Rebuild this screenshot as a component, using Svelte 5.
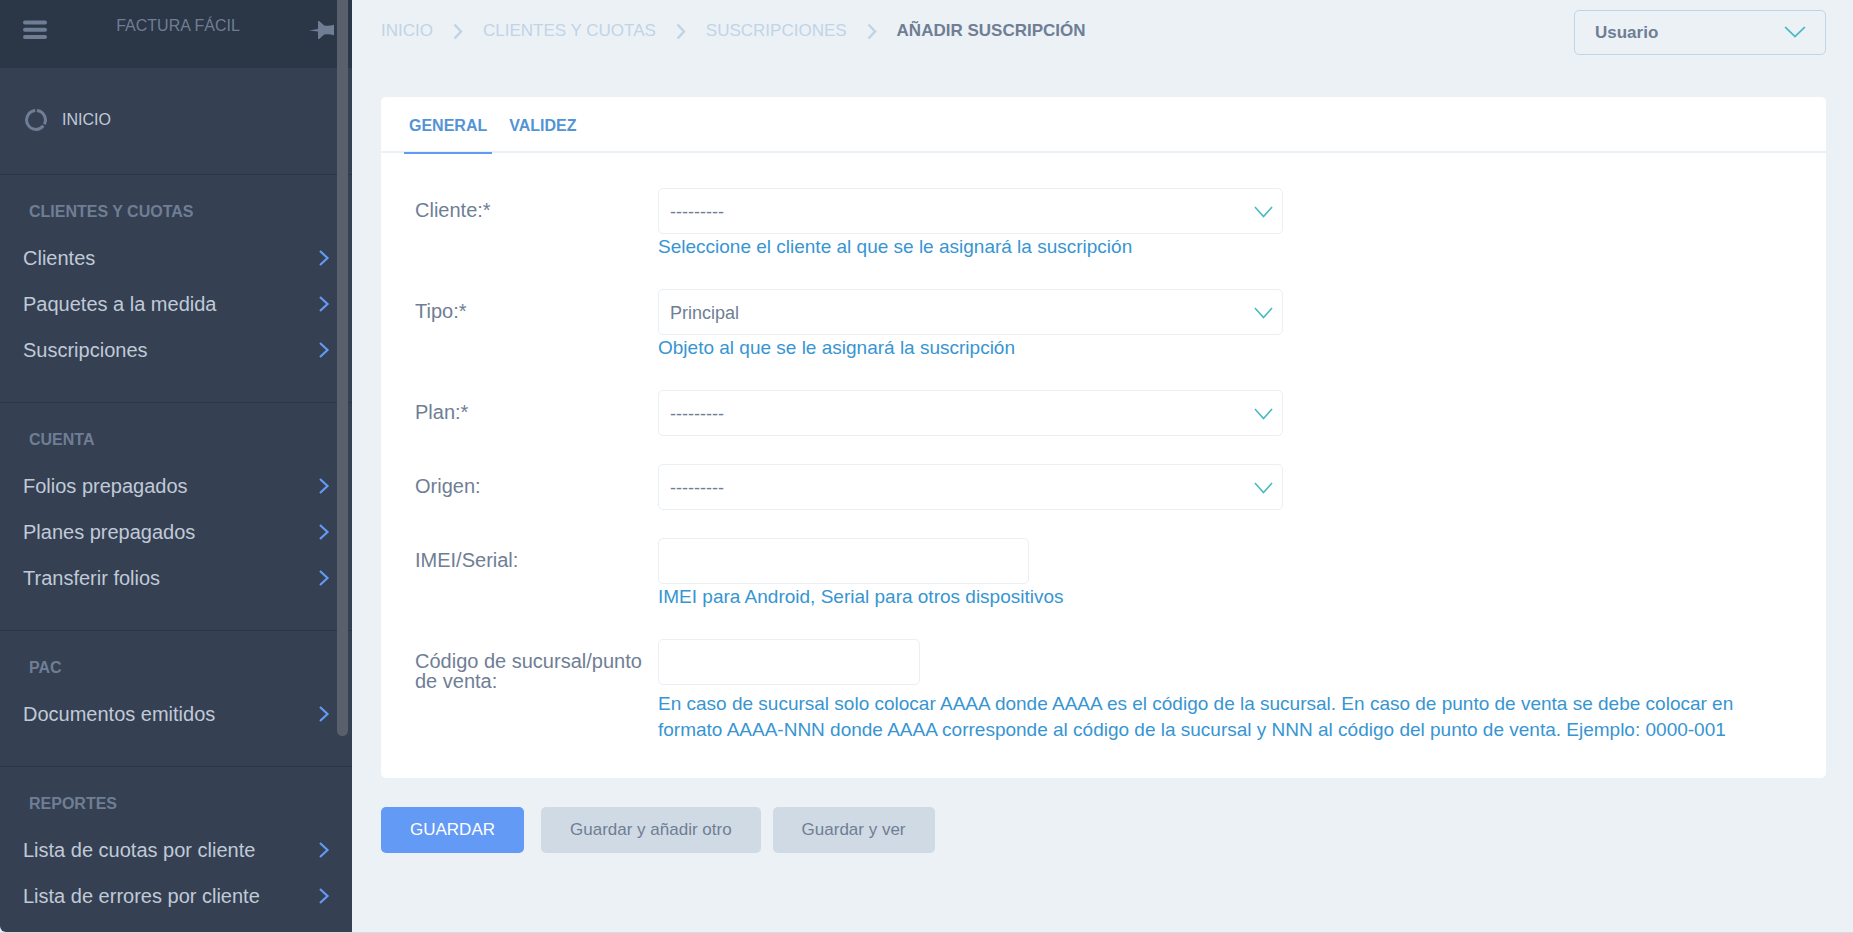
<script>
  const sections = [
    { title: 'Clientes y cuotas', items: ['Clientes', 'Paquetes a la medida', 'Suscripciones'] },
    { title: 'Cuenta', items: ['Folios prepagados', 'Planes prepagados', 'Transferir folios'] },
    { title: 'PAC', items: ['Documentos emitidos'] },
    { title: 'Reportes', items: ['Lista de cuotas por cliente', 'Lista de errores por cliente'] }
  ]
  const crumbs = ['Inicio', 'Clientes y cuotas', 'Suscripciones']
  const tabs = ['General', 'Validez']
  const fields = [
    { id: 'cliente', label: 'Cliente:*', options: ['---------'], help: 'Seleccione el cliente al que se le asignará la suscripción' },
    { id: 'tipo', label: 'Tipo:*', options: ['Principal'], help: 'Objeto al que se le asignará la suscripción' },
    { id: 'plan', label: 'Plan:*', options: ['---------'] },
    { id: 'origen', label: 'Origen:', options: ['---------'] },
    { id: 'imei', label: 'IMEI/Serial:', size: 'medium', help: 'IMEI para Android, Serial para otros dispositivos' },
    {
      id: 'codigo',
      label: 'Código de sucursal/punto de venta:',
      size: 'short',
      help: 'En caso de sucursal solo colocar AAAA donde AAAA es el código de la sucursal. En caso de punto de venta se debe colocar en formato AAAA-NNN donde AAAA corresponde al código de la sucursal y NNN al código del punto de venta. Ejemplo: 0000-001',
      long: true
    }
  ]
  let active = $state('General')
</script>

{#snippet down(size)}
  <svg class="down" width={size} height="12" viewBox="0 0 20 12" preserveAspectRatio="none" aria-hidden="true">
    <path d="M1 1l9 9.500 9-9.500" fill="none" stroke="#47bac1" stroke-width="1.700" />
  </svg>
{/snippet}

<div class="layout">
  <aside class="sidebar">
    <header class="brand">
      <button class="icon" aria-label="Menú">
        <svg width="24" height="20" viewBox="0 0 24 20">
          <path d="M2 2.500h20M2 9.800h20M2 17h20" stroke="#6f7e95" stroke-width="4" stroke-linecap="round" />
        </svg>
      </button>
      <a class="name" href="#inicio">Factura fácil</a>
      <button class="icon" aria-label="Fijar menú">
        <svg width="26" height="20" viewBox="0 0 26 20">
          <path d="M0 10.500l9-1.500V1h1.200l5 4.500q5 .8 9.800-.8v10.600q-4.800-1.600-9.800-.8l-5 4.500H9v-7.500z" fill="#6f7e95" />
        </svg>
      </button>
    </header>
    <a class="home" href="#inicio">
      <svg width="22" height="22" viewBox="0 0 22 22" fill="none" stroke="#6f7e95" stroke-width="3">
        <path d="M10.300 1.600A9.400 9.400 0 1 0 18.400 16.800M12 1.600A9.400 9.400 0 0 1 19.400 15.200" />
      </svg>
      <span>Inicio</span>
    </a>
    {#each sections as section}
      <nav class="section" aria-label={section.title}>
        <h2>{section.title}</h2>
        {#each section.items as item}
          <a class="item" href="#{item}">
            <span>{item}</span>
            <svg width="12" height="16" viewBox="0 0 12 16" aria-hidden="true">
              <path d="M2 1l7.500 7L2 15" fill="none" stroke="#639af5" stroke-width="2.200" />
            </svg>
          </a>
        {/each}
      </nav>
    {/each}
    <div class="scroll-thumb"></div>
  </aside>

  <main>
    <div class="top">
      <nav class="crumbs" aria-label="Ruta">
        {#each crumbs as crumb}
          <a href="#{crumb}">{crumb}</a>
          <svg width="10" height="16" viewBox="0 0 10 16" aria-hidden="true">
            <path d="M1.500 1.500l6.500 7-6.500 7" fill="none" stroke="#c0d4e8" stroke-width="2.500" />
          </svg>
        {/each}
        <strong>Añadir suscripción</strong>
      </nav>
      <div class="select user">
        <select aria-label="Usuario"><option>Usuario</option></select>
        {@render down(22)}
      </div>
    </div>

    <form onsubmit={(e) => e.preventDefault()}>
      <div class="card">
        <div class="tabs">
          {#each tabs as tab}
            <button type="button" class="tab" class:active={active === tab} onclick={() => (active = tab)}>{tab}</button>
          {/each}
        </div>
        <div class="fields">
          {#each fields as field}
            <div class="row">
              <label for={field.id}>{field.label}</label>
              <div class="control">
                {#if field.options}
                  <div class="select">
                    <select id={field.id}>
                      {#each field.options as option}<option>{option}</option>{/each}
                    </select>
                    {@render down(19)}
                  </div>
                {:else}
                  <input id={field.id} class={field.size} type="text" />
                {/if}
                {#if field.help}<p class="help" class:long={field.long}>{field.help}</p>{/if}
              </div>
            </div>
          {/each}
        </div>
      </div>
      <div class="actions">
        <button type="submit" class="btn primary">Guardar</button>
        <button type="submit" class="btn">Guardar y añadir otro</button>
        <button type="submit" class="btn">Guardar y ver</button>
      </div>
    </form>
  </main>
</div>

<style>
  :global(body) { background: #ecf1f5; }
  .layout {
    display: flex; height: 100vh; box-sizing: border-box; overflow: hidden;
    border-bottom: 1px solid #d9dcdf; background: #ecf1f5; color: #6f7e95;
    font-family: Arial, "Liberation Sans", sans-serif; font-size: 17px;
  }
  a { color: inherit; text-decoration: none; }
  button, select, input { font-family: inherit; color: inherit; }
  svg { display: block; flex: none; }

  .sidebar {
    position: relative; flex: none; width: 352px; overflow: hidden;
    background: #354052; color: #c0cad8; border-bottom-left-radius: 6px;
  }
  .brand {
    display: flex; justify-content: space-between; align-items: flex-start;
    height: 68px; padding: 16px 17px 0 23px; box-sizing: border-box; background: #2b3647;
  }
  .icon { padding: 4px 0; border: none; background: none; cursor: pointer; }
  .name { font-size: 16px; line-height: 20px; color: #6f7e95; text-transform: uppercase; }
  .home {
    display: flex; align-items: center; gap: 15px; height: 106px; padding: 0 25px 2px;
    box-sizing: border-box; font-size: 16px; text-transform: uppercase;
  }
  .section { padding: 27px 22px 29px 23px; border-top: 1px solid #2b3647; }
  h2 {
    margin: 0 0 13px; padding-left: 6px; font-size: 16px; line-height: 20px;
    color: #6f7e95; text-transform: uppercase;
  }
  .item {
    display: flex; align-items: center; justify-content: space-between;
    height: 46px; font-size: 20px;
  }
  .scroll-thumb {
    position: absolute; top: 0; right: 4px; width: 11px; height: 79%;
    border-radius: 0 0 6px 6px; background: #5a606b;
  }

  main { flex: 1; min-width: 0; padding: 10px 27px 0 29px; }
  .top { display: flex; justify-content: space-between; align-items: flex-start; }
  .crumbs {
    display: flex; align-items: center; gap: 20px; height: 41px;
    color: #c0d4e8; text-transform: uppercase;
  }
  .crumbs strong { color: #6f7e95; }

  .select { position: relative; width: 625px; max-width: 100%; }
  select, input {
    display: block; width: 100%; height: 46px; box-sizing: border-box; padding: 2px 11px 0;
    border: 1px solid #e8f0f6; border-radius: 5px; background: #fff;
    font-size: 18px; appearance: none; outline: none;
  }
  .down { position: absolute; top: 18px; right: 10px; pointer-events: none; }
  .user { width: 252px; }
  .user select {
    height: 45px; padding: 0 20px; border-color: #c0d4e8; background: transparent;
    font-size: 17px; font-weight: bold;
  }
  .user .down { top: 16px; right: 20px; }
  .medium { width: 371px; }
  .short { width: 262px; }

  .card { margin-top: 42px; border-radius: 5px; background: #fff; }
  .tabs { display: flex; gap: 12px; padding: 0 23px; border-bottom: 2px solid #ecf1f5; }
  .tab {
    height: 57px; margin-bottom: -3px; padding: 2px 5px 0; border: none; border-bottom: 2px solid transparent;
    background: none; color: #5394d6; font-size: 16px; font-weight: bold;
    text-transform: uppercase; cursor: pointer;
  }
  .tab.active { border-color: #639af5; }
  .fields { display: grid; gap: 28px; padding: 35px 34px; }
  .row { display: grid; grid-template-columns: 243px 1fr; }
  label { padding: 12px 14px 0 0; font-size: 20px; line-height: 20px; }
  .help { margin: 0; padding-bottom: 1px; font-size: 19px; line-height: 26px; color: #3795d2; }
  .help.long { padding: 6px 0 0; }

  .actions { display: flex; gap: 12px; margin-top: 29px; }
  .btn {
    height: 46px; padding: 0 29px; border: none; border-radius: 5px;
    background: #d0dae4; font-size: 17px; cursor: pointer;
  }
  .btn.primary { margin-right: 5px; background: #639af5; color: #fff; text-transform: uppercase; }
</style>
